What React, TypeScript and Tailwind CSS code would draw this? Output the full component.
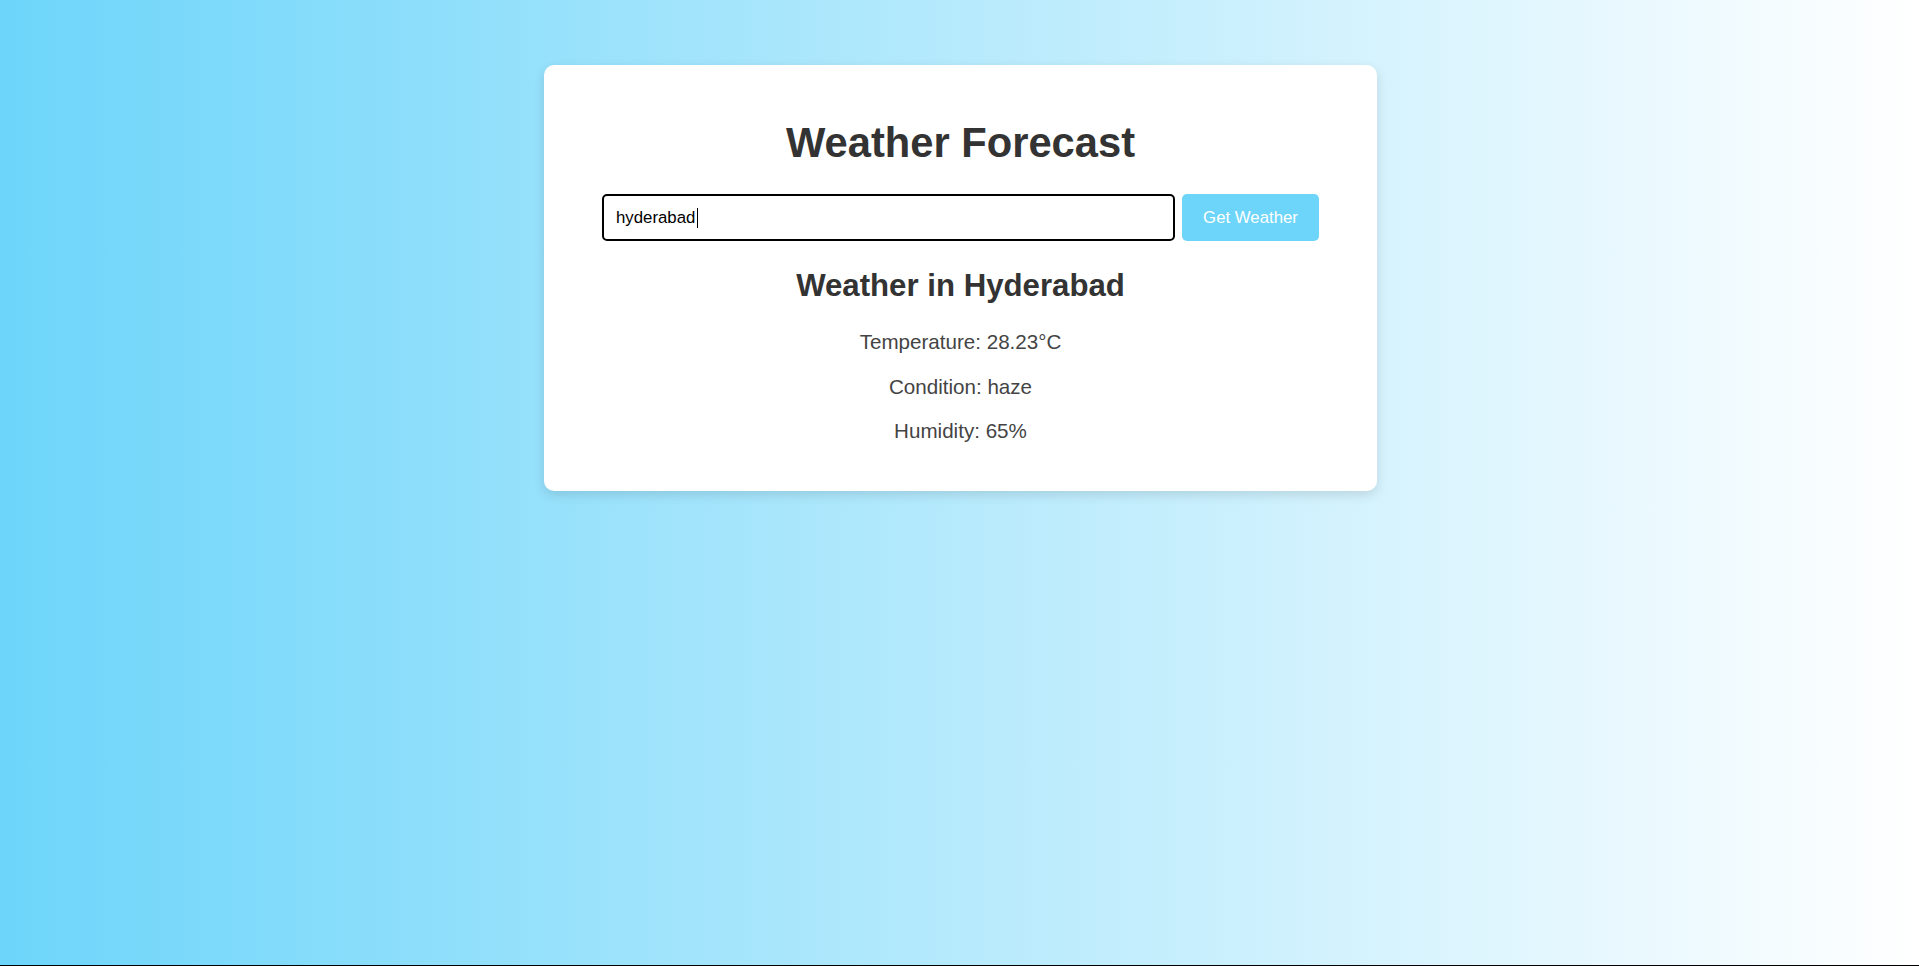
import React, { useState } from 'react';

export default function App() {
  const [city, setCity] = useState('hyderabad');

  const weather = {
    name: 'Hyderabad',
    temp: 28.23,
    condition: 'haze',
    humidity: 65,
  };

  return (
    <div className="h-[966px] w-full bg-black font-['Liberation_Sans',Arial,sans-serif]">
      <div className="h-[965px] w-full bg-[linear-gradient(to_right,#6dd5fa,#ffffff)] pt-[65px] pl-[2px]">
        <div className="mx-auto w-[833px] rounded-[10px] bg-white pt-[54px] pb-[49px] text-center text-[#333] shadow-[0_4px_12px_rgba(0,0,0,0.12)]">
          <h1 className="text-[41.7px] font-bold leading-[47px]">Weather Forecast</h1>

          <div className="mt-[28px] flex justify-center">
            <div className="relative">
              <input
                type="text"
                value={city}
                onChange={e => setCity(e.target.value)}
                className="h-[47px] w-[573px] rounded-[5px] border-2 border-black px-[12px] text-[16.8px] text-black outline-none"
              />
              {/* caret of the focused field */}
              <span className="pointer-events-none absolute left-[95px] top-[14px] h-[20px] w-px bg-black" />
            </div>
            <button className="ml-[7px] h-[47px] w-[137px] rounded-[5px] bg-[#6dd5fa] text-[16.8px] text-white">
              Get Weather
            </button>
          </div>

          <h2 className="mt-[27px] text-[31.2px] font-bold leading-[36px]">Weather in {weather.name}</h2>
          <div className="text-[#444]">
            <p className="mt-[26px] text-[20.6px] leading-[23px]">Temperature: {weather.temp}°C</p>
            <p className="mt-[21.5px] text-[20.6px] leading-[23px]">Condition: {weather.condition}</p>
            <p className="mt-[21.5px] text-[20.6px] leading-[23px]">Humidity: {weather.humidity}%</p>
          </div>
        </div>
      </div>
    </div>
  );
}
